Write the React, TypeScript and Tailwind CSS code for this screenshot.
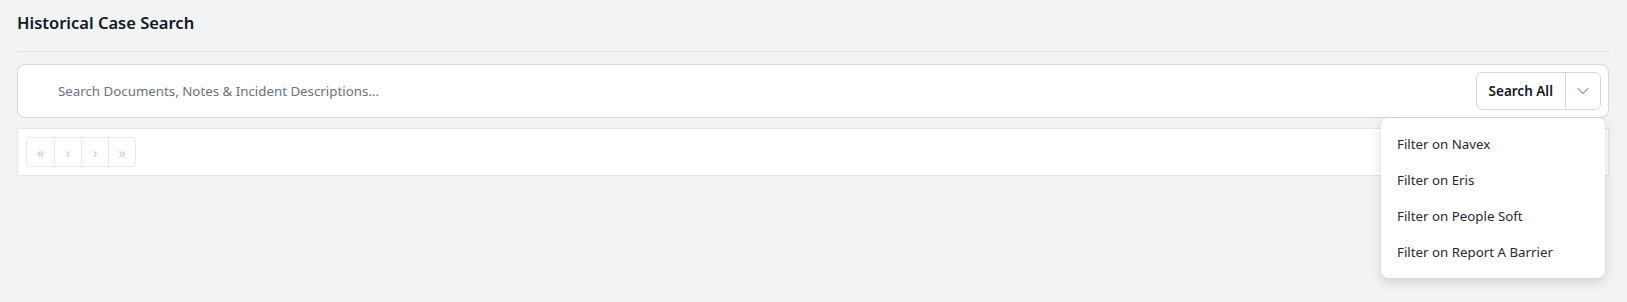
import React from "react";

const font = { fontFamily: '"Noto Sans", "Open Sans", sans-serif' };

function Chevron() {
  return (
    <svg width="12" height="8" viewBox="0 0 12 8" fill="none">
      <path d="M1 1.5 L6 6.5 L11 1.5" stroke="#9ca3af" strokeWidth="1.2" strokeLinecap="round" strokeLinejoin="round" />
    </svg>
  );
}

export default function App() {
  const items = ["Filter on Navex", "Filter on Eris", "Filter on People Soft", "Filter on Report A Barrier"];
  const pages = ["«", "‹", "›", "»"];
  return (
    <div className="min-h-screen bg-[#f2f3f5] pl-[17px] pr-[18px]" style={font}>
      <div className="h-[52px] border-b border-[#e3e5e8] pt-[10px]">
        <h1 className="text-[16.5px] font-semibold leading-[26px] text-[#111827]">Historical Case Search</h1>
      </div>
      <div className="relative mt-[12px]">
        <div className="flex h-[54px] items-center rounded-[8px] border border-[#d4d7dc] bg-white pl-[40px] pr-[7px]">
          <div className="mt-[2px] flex-1 text-[13.3px] text-[#6b7280]">Search Documents, Notes &amp; Incident Descriptions...</div>
          <div className="flex h-[38px] items-stretch rounded-[6px] border border-[#d4d7dc] bg-white">
            <button className="px-[12px] text-[13.5px] font-semibold text-[#111827]">Search All</button>
            <div className="flex w-[35px] items-center justify-center border-l border-[#d4d7dc]">
              <Chevron />
            </div>
          </div>
        </div>
        <div className="absolute right-[4px] top-full z-10 w-[224px] rounded-[8px] bg-white pb-[7px] pt-[9px] shadow-[0_4px_12px_rgba(0,0,0,0.15)]">
          {items.map((t) => (
            <div key={t} className="flex h-[36px] items-center px-[16px] text-[13.3px] text-[#1f2937]">
              {t}
            </div>
          ))}
        </div>
      </div>
      <div className="mt-[10px] h-[48px] border border-[#e5e7eb] bg-white p-[8px]">
        <div className="flex h-[30px] w-fit rounded-[4px] border border-[#e5e7eb]">
          {pages.map((p, i) => (
            <div
              key={i}
              className={`flex w-[27px] items-center justify-center text-[15px] text-[#c7ced8] ${i > 0 ? "border-l border-[#e5e7eb]" : ""}`}
            >
              {p}
            </div>
          ))}
        </div>
      </div>
    </div>
  );
}
